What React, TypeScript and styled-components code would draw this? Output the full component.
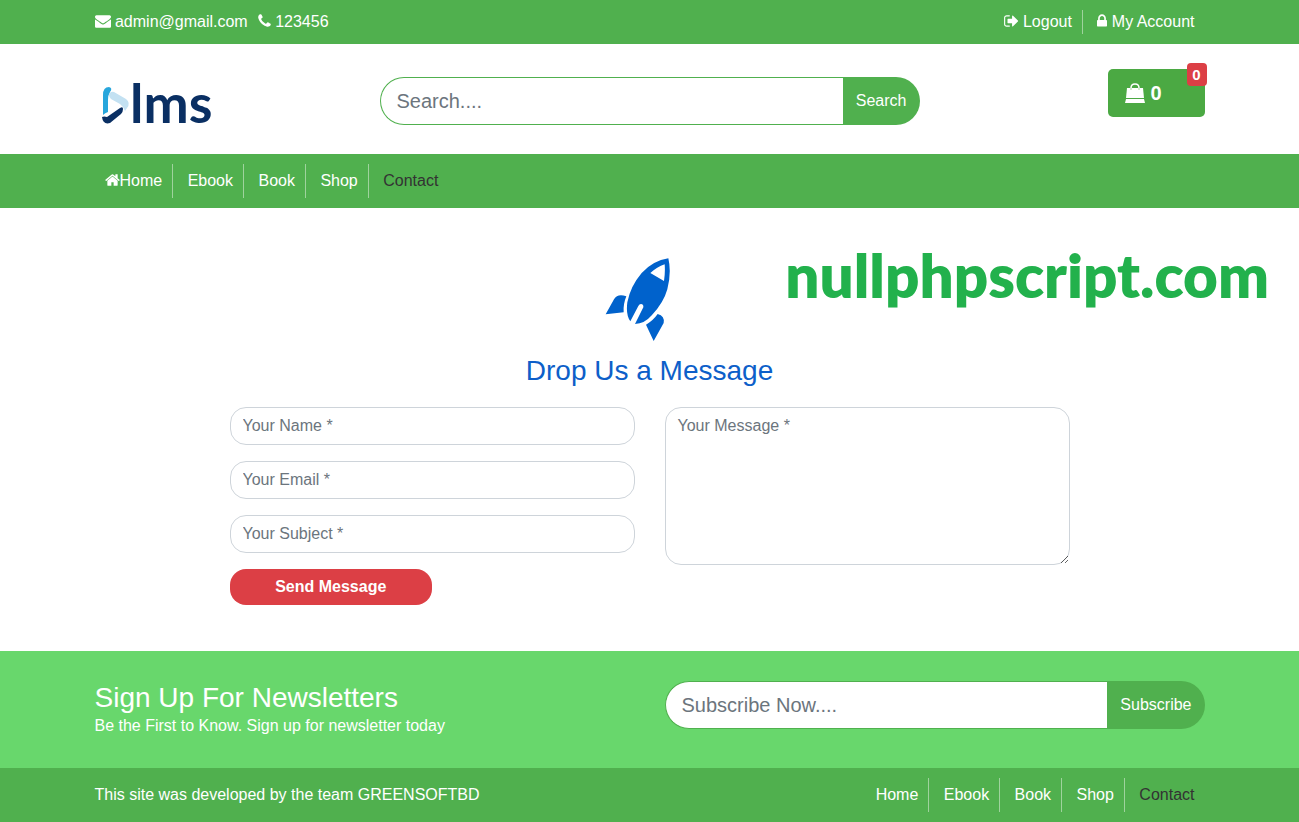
import React from "react";
import styled, { createGlobalStyle } from "styled-components";

const GREEN = "#50b04e";

const GlobalStyle = createGlobalStyle`
  *, *::before, *::after { box-sizing: border-box; }
  body {
    margin: 0;
    background: #fff;
    color: #212529;
    font-family: "Liberation Sans", Arial, sans-serif;
    font-size: 16px;
    line-height: 24px;
  }
  input, textarea, button { font-family: inherit; }
`;

const Container = styled.div`
  width: 100%;
  max-width: 1140px;
  margin: 0 auto;
  padding: 0 15px;
`;

const SplitRow = styled(Container)`
  display: flex;
  justify-content: space-between;
  align-items: center;
`;

const Bar = styled.div`
  background: ${GREEN};
  color: #fff;
  padding: 10px 0;
`;

const ContactInfo = styled.div`
  display: flex;
  gap: 10px;
`;

const InfoLink = styled.a`
  color: #fff;
  text-decoration: none;
`;

const LinkList = styled.ul`
  margin: 0;
  padding: 0;
  list-style: none;
`;

const LinkItem = styled.li<{ $tall?: boolean }>`
  display: inline-block;
  vertical-align: top;
  padding: ${(p) => (p.$tall ? "5px 10px" : "0 10px")};
  border-right: 1px solid rgba(255, 255, 255, 0.45);
  &:last-child { border-right: 0; }
`;

const BarLink = styled.a<{ $active?: boolean }>`
  color: ${(p) => (p.$active ? "#333" : "#fff")};
  text-decoration: none;
`;

const Glyph = styled.svg`
  height: 16px;
  vertical-align: -2px;
  fill: currentColor;
`;

const HeaderGrid = styled(Container)`
  display: grid;
  grid-template-columns: repeat(12, 1fr);
  column-gap: 30px;
  align-items: start;
  padding-top: 25px;
  padding-bottom: 29px;
`;

const Logo = styled.svg`
  display: block;
  grid-column: span 3;
  width: 120px;
  height: 56px;
  overflow: visible;
`;

const SearchForm = styled.form`
  display: flex;
  height: 48px;
`;

const HeaderSearch = styled(SearchForm)`
  grid-column: span 6;
  margin-top: 8px;
`;

const PillInput = styled.input`
  flex: 1;
  min-width: 0;
  padding: 8px 16px;
  border: 1px solid ${GREEN};
  border-right: 0;
  border-radius: 24px 0 0 24px;
  background: #fff;
  color: #495057;
  font-size: 20px;
  &::placeholder { color: #6c757d; opacity: 1; }
`;

const PillButton = styled.button`
  padding: 0 13px;
  border: 0;
  border-radius: 0 24px 24px 0;
  background: ${GREEN};
  color: #fff;
  font-size: 16px;
`;

const CartButton = styled.button`
  position: relative;
  grid-column: span 3;
  justify-self: end;
  display: flex;
  align-items: center;
  gap: 6px;
  width: 97px;
  height: 48px;
  padding: 0 17px;
  border: 0;
  border-radius: 5px;
  background: #4ba943;
  color: #fff;
  font-size: 20px;
  font-weight: 700;
`;

const CartBadge = styled.span`
  position: absolute;
  top: -6px;
  right: -2px;
  width: 20px;
  height: 23px;
  border-radius: 4px;
  background: #dc3f45;
  font-size: 15px;
  line-height: 24px;
  text-align: center;
`;

const Main = styled.main`
  position: relative;
  display: flex;
  flex-direction: column;
  align-items: center;
  padding: 50px 15px 46px;
`;

const Rocket = styled.svg`
  width: 66px;
  height: 83px;
  margin-right: 24px;
`;

const Title = styled.h3`
  margin: 13px 0 19px;
  color: #0d5fc9;
  font-size: 28px;
  font-weight: 400;
  line-height: 34px;
`;

const Watermark = styled.span`
  position: absolute;
  top: 31px;
  right: 30px;
  color: #22b14c;
  font-family: Lato, sans-serif;
  font-size: 60px;
  font-weight: 800;
  line-height: 72px;
`;

const MessageForm = styled.form`
  display: grid;
  grid-template-columns: 1fr 1fr;
  column-gap: 30px;
  align-items: start;
  width: 100%;
  max-width: 840px;
`;

const Fields = styled.div`
  display: flex;
  flex-direction: column;
  gap: 16px;
`;

const Field = styled.input`
  height: 38px;
  padding: 6px 12px;
  border: 1px solid #ced4da;
  border-radius: 16px;
  font-size: 16px;
  &::placeholder { color: #6c757d; opacity: 1; }
`;

const MessageField = styled.textarea`
  display: block;
  width: 100%;
  height: 158px;
  padding: 6px 12px;
  border: 1px solid #ced4da;
  border-radius: 16px;
  font-size: 16px;
  line-height: 24px;
  &::placeholder { color: #6c757d; opacity: 1; }
`;

const SendButton = styled.button`
  width: 50%;
  height: 36px;
  border: 0;
  border-radius: 16px;
  background: #dc3f45;
  color: #fff;
  font-size: 16px;
  font-weight: 700;
`;

const Newsletter = styled.section`
  padding: 30px 0;
  background: #68d76c;
  color: #fff;
`;

const NewsletterGrid = styled(Container)`
  display: grid;
  grid-template-columns: 1fr 1fr;
  column-gap: 30px;
  align-items: start;
`;

const NewsletterTitle = styled.h3`
  margin: 0;
  font-size: 28px;
  font-weight: 400;
  line-height: 33px;
`;

const NewsletterText = styled.p`
  margin: 0;
`;

const pages = ["Home", "Ebook", "Book", "Shop", "Contact"];

const HomeIcon = () => (
  <Glyph viewBox="64 0 1664 1792" width="15" aria-hidden="true">
    <path d="M1472 992v480q0 26-19 45t-45 19h-384v-384h-256v384h-384q-26 0-45-19t-19-45v-480q0-1 .5-3t.5-3l575-474 575 474q1 2 1 6zm223-69l-62 74q-8 9-21 11h-3q-13 0-21-7l-692-577-692 577q-12 8-24 7-13-2-21-11l-62-74q-8-10-7-23.500t11-21.500l719-599q32-26 76-26t76 26l244 204v-195q0-14 9-23t23-9h192q14 0 23 9t9 23v408l219 182q10 8 11 21.500t-7 23.500z" />
  </Glyph>
);

const PageLinks = ({ withIcon }: { withIcon?: boolean }) => (
  <LinkList>
    {pages.map((page) => (
      <React.Fragment key={page}>
        <LinkItem $tall>
          <BarLink href="#" $active={page === "Contact"}>
            {withIcon && page === "Home" && <HomeIcon />}
            {page}
          </BarLink>
        </LinkItem>
        {page !== "Contact" && " "}
      </React.Fragment>
    ))}
  </LinkList>
);

export default function App() {
  return (
    <>
      <GlobalStyle />
      <Bar>
        <SplitRow>
          <ContactInfo>
            <InfoLink href="mailto:admin@gmail.com">
              <Glyph viewBox="0 0 1792 1792" width="16" aria-hidden="true">
                <path d="M1792 710v794q0 66-47 113t-113 47h-1472q-66 0-113-47t-47-113v-794q44 49 101 87 362 246 497 345 57 42 92.500 65.500t94.500 48 110 24.500h2q51 0 110-24.500t94.500-48 92.500-65.500q170-123 498-345 57-39 100-87zm0-294q0 79-49 151t-122 123q-376 261-468 325-10 7-42.500 31t-54 38.800-52 33.200-57.500 27.500-50 9h-2q-23 0-50-9t-57.500-27.500-52-33.200-54-38.800-42.500-31q-91-64-262-182.500t-205-142.500q-62-42-117-115.500t-55-136.500q0-78 41.500-130t118.500-52h1472q65 0 112.500 47t47.500 113z" />
              </Glyph>{" "}
              admin@gmail.com
            </InfoLink>
            <InfoLink href="tel:123456">
              <Glyph viewBox="192 0 1408 1792" width="13" aria-hidden="true">
                <path d="M1600 1240q0 27-10 70.500t-21 68.500q-21 50-122 106-94 51-186 51-27 0-52.500-3.500t-57.500-12.500-47.500-14.500-55.500-20.500-49-18q-98-35-175-83-128-79-264.500-215.500t-215.500-264.500q-48-77-83-175-3-9-18-49t-20.500-55.500-14.500-47.500-12.500-57.500-3.500-52.500q0-92 51-186 56-101 106-122 25-11 68.500-21t70.500-10q14 0 21 3 18 6 53 76 11 19 30 54t35 63.500 31 53.500q3 4 17.500 25t21.500 35.500 7 28.500q0 20-28.500 50t-62 55-62 53-28.500 46q0 9 5 22.500t8.500 20.500 14 24 11.500 19q76 137 174 235t235 174q2 1 19 11.500t24 14 20.500 8.500 22.500 5q18 0 46-28.500t53-62 55-62 50-28.500q14 0 28.500 7t35.500 21.500 25 17.500q25 15 53.500 31t63.500 35 54 30q70 35 76 53 3 7 3 21z" />
              </Glyph>{" "}
              123456
            </InfoLink>
          </ContactInfo>
          <LinkList>
            <LinkItem>
              <BarLink href="#">
                <Glyph viewBox="64 0 1664 1792" width="15" aria-hidden="true">
                  <path d="M704 1440q0 4 1 20t.5 26.500-3 23.500-10 19.500-20.500 6.500h-320q-119 0-203.500-84.500t-84.500-203.500v-704q0-119 84.500-203.500t203.500-84.500h320q13 0 22.500 9.500t9.500 22.500q0 4 1 20t.5 26.500-3 23.500-10 19.500-20.500 6.500h-320q-66 0-113 47t-47 113v704q0 66 47 113t113 47h312l11.500 1 11.500 3 8 5.500 7 9 2 13.500zm928-544q0 26-19 45l-544 544q-19 19-45 19t-45-19-19-45v-288h-448q-26 0-45-19t-19-45v-384q0-26 19-45t45-19h448v-288q0-26 19-45t45-19 45 19l544 544q19 19 19 45z" />
                </Glyph>{" "}
                Logout
              </BarLink>
            </LinkItem>{" "}
            <LinkItem>
              <BarLink href="#">
                <Glyph viewBox="320 0 1152 1792" width="10" aria-hidden="true">
                  <path d="M640 768h512v-192q0-106-75-181t-181-75-181 75-75 181v192zm832 96v576q0 40-28 68t-68 28h-960q-40 0-68-28t-28-68v-576q0-40 28-68t68-28h32v-192q0-184 132-316t316-132 316 132 132 316v192h32q40 0 68 28t28 68z" />
                </Glyph>{" "}
                My Account
              </BarLink>
            </LinkItem>
          </LinkList>
        </SplitRow>
      </Bar>

      <header>
        <HeaderGrid>
          <Logo viewBox="0 0 120 56" role="img" aria-label="lms">
            <path fill="#27a6dc" d="M8 46V26Q8 18 14 18Q18 19 15 23Q13 26 13 31V43Q10 44 8 46Z" />
            <path fill="#c3e1f2" d="M14 26Q15 22 19 23L31 30Q36 34 32 39L30 42Q28 37 25 35L16 30Q14 28 14 26Z" />
            <path fill="#0a2f63" d="M7 48Q9 47 12 48L25 39Q28 37 28 40Q28 43 26 45L15 54Q8 56 7 48Z" />
            <text
              x="35"
              y="54"
              fill="#0a2f63"
              fontFamily="Lato, sans-serif"
              fontSize="54"
              fontWeight="700"
            >
              lms
            </text>
          </Logo>
          <HeaderSearch>
            <PillInput type="text" placeholder="Search...." aria-label="Search" />
            <PillButton type="button">Search</PillButton>
          </HeaderSearch>
          <CartButton type="button">
            <svg width="20" height="20" viewBox="0 0 20 20" fill="currentColor" aria-hidden="true">
              <path d="M2 5H18L19 15H1Z" />
              <path d="M1 16H19L20 20H0Z" />
              <path d="M6 7V5Q6 1 10 1Q14 1 14 5V7" fill="none" stroke="#4ba943" strokeWidth="2" />
              <path d="M6 8V5Q6 1 10 1Q14 1 14 5V8" fill="none" stroke="currentColor" strokeWidth="1.500" />
            </svg>
            0
            <CartBadge>0</CartBadge>
          </CartButton>
        </HeaderGrid>
      </header>

      <Bar as="nav">
        <Container>
          <PageLinks withIcon />
        </Container>
      </Bar>

      <Main>
        <Rocket viewBox="46 39 198 249" fill="#0062cc" aria-hidden="true">
          <path
            fillRule="evenodd"
            d="M236 40Q246 82 233 133Q222 173 187 210Q165 236 136 237L161 187Q162 177 154 177Q149 177 146 183L122 229Q108 209 113 172Q122 124 156 84Q190 47 236 40ZM225 58Q202 66 182 84L223 108Q227 82 225 58Z"
          />
          <path d="M48 208L73 163Q84 144 110 154Q100 178 102 202Z" />
          <path d="M204 207Q226 213 222 234L192 288L169 239Q190 227 204 207Z" />
        </Rocket>
        <Title>Drop Us a Message</Title>
        <MessageForm>
          <Fields>
            <Field type="text" placeholder="Your Name *" aria-label="Your Name" />
            <Field type="email" placeholder="Your Email *" aria-label="Your Email" />
            <Field type="text" placeholder="Your Subject *" aria-label="Your Subject" />
            <SendButton type="button">Send Message</SendButton>
          </Fields>
          <MessageField placeholder="Your Message *" aria-label="Your Message" />
        </MessageForm>
        <Watermark>nullphpscript.com</Watermark>
      </Main>

      <Newsletter>
        <NewsletterGrid>
          <div>
            <NewsletterTitle>Sign Up For Newsletters</NewsletterTitle>
            <NewsletterText>Be the First to Know. Sign up for newsletter today</NewsletterText>
          </div>
          <SearchForm>
            <PillInput type="email" placeholder="Subscribe Now...." aria-label="Email address" />
            <PillButton type="button">Subscribe</PillButton>
          </SearchForm>
        </NewsletterGrid>
      </Newsletter>

      <Bar as="footer">
        <SplitRow>
          <span>This site was developed by the team GREENSOFTBD</span>
          <PageLinks />
        </SplitRow>
      </Bar>
    </>
  );
}
